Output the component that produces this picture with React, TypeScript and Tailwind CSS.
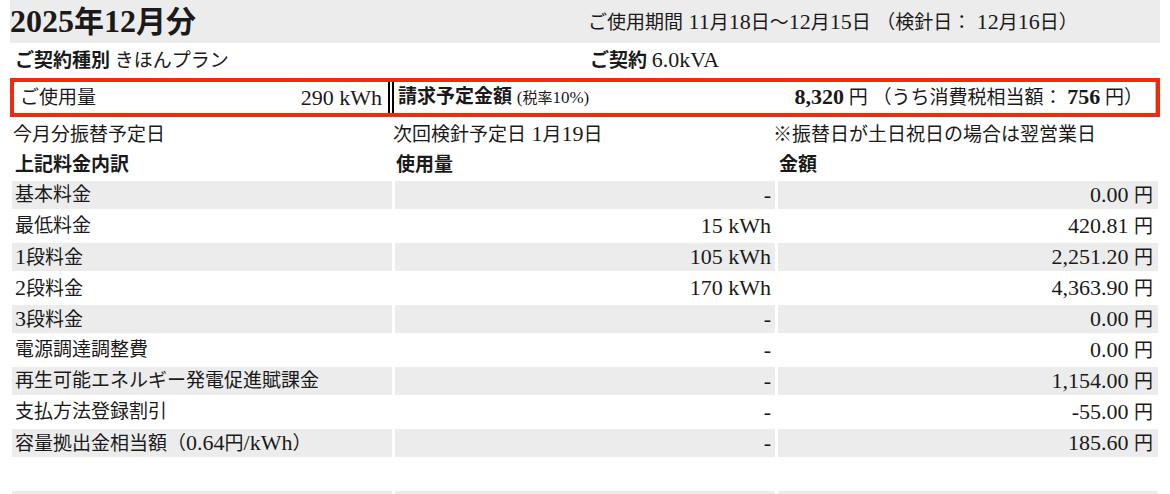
const rows = [
  { label: '基本料金', usage: '-', amount: '0.00 円' },
  { label: '最低料金', usage: '15 kWh', amount: '420.81 円' },
  { label: '1段料金', usage: '105 kWh', amount: '2,251.20 円' },
  { label: '2段料金', usage: '170 kWh', amount: '4,363.90 円' },
  { label: '3段料金', usage: '-', amount: '0.00 円' },
  { label: '電源調達調整費', usage: '-', amount: '0.00 円' },
  { label: '再生可能エネルギー発電促進賦課金', usage: '-', amount: '1,154.00 円' },
  { label: '支払方法登録割引', usage: '-', amount: '-55.00 円' },
  { label: '容量拠出金相当額（0.64円/kWh）', usage: '-', amount: '185.60 円' },
  { label: '', usage: '', amount: '' },
  { label: '', usage: '', amount: '' },
];

// latin runs render a bit larger so they sit like the mincho font's roman glyphs
const splitter = /([^\u3000-\u30ff\u3400-\u9fff\uff00-\uffef※]+)/;
const isLatin = /^[^\u3000-\u30ff\u3400-\u9fff\uff00-\uffef※]+$/;

const Mixed = ({ text, latin = 'text-[22px]' }: { text: string; latin?: string }) => (
  <>
    {text.split(splitter).map((part, i) =>
      part && isLatin.test(part) ? (
        <span key={i} className={latin}>
          {part}
        </span>
      ) : (
        part
      )
    )}
  </>
);

const App = () => {
  return (
    <div className="w-[1170px] h-[494px] overflow-hidden bg-white px-[10px] text-[19px] leading-[24px] text-[#1a1a1a] [font-family:'Liberation_Serif','Noto_Sans_CJK_JP',serif]">
      {/* header band */}
      <div className="grid grid-cols-2 h-[43px] items-center bg-[#ececec]">
        <h1 className="text-[30px] font-bold leading-[34px]">
          <Mixed text="2025年12月分" latin="text-[32px]" />
        </h1>
        <div className="pl-[3px] pt-[2px]">
          <Mixed text="ご使用期間 11月18日〜12月15日 （検針日： 12月16日）" />
        </div>
      </div>

      <div className="grid grid-cols-2 h-[35px] items-center">
        <div className="pl-[5px]">
          <span className="font-bold">ご契約種別</span> きほんプラン
        </div>
        <div className="pl-[5px]">
          <span className="font-bold">ご契約</span> <Mixed text="6.0kVA" />
        </div>
      </div>

      {/* highlighted summary */}
      <div className="flex h-[39px] border-4 border-[#f5280a]">
        <div className="flex w-[374px] items-center justify-between pl-[6px] pr-[6px]">
          <span>ご使用量</span>
          <span className="text-[22px]">290 kWh</span>
        </div>
        <div className="flex gap-[2px]">
          <div className="w-[2px] bg-black" />
          <div className="w-[2px] bg-black" />
        </div>
        <div className="flex flex-1 items-center justify-between border-r border-[#bbbbbb] pl-[4px] pr-[12px]">
          <span>
            <span className="font-bold">請求予定金額</span>{' '}
            <span className="text-[15px]">
              <Mixed text="(税率10%)" latin="text-[17px]" />
            </span>
          </span>
          <span>
            <span className="font-bold text-[22px]">8,320</span> 円 （うち消費税相当額：{' '}
            <span className="font-bold text-[22px]">756</span> 円）
          </span>
        </div>
      </div>

      <div className="flex flex-col gap-[3px] pt-[2px]">
        <div className="grid grid-cols-[380px_380px_1fr] h-[28px] items-center px-[3px] pt-[3px]">
          <div>今月分振替予定日</div>
          <div>
            <Mixed text="次回検針予定日 1月19日" />
          </div>
          <div>※振替日が土日祝日の場合は翌営業日</div>
        </div>

        <div className="grid grid-cols-3 gap-[3px] h-[28px] items-center px-[2px] pt-[2px] font-bold">
          <div className="pl-[3px]">上記料金内訳</div>
          <div className="pl-[1px]">使用量</div>
          <div className="pl-[1px]">金額</div>
        </div>

        {rows.map((row, i) => {
          const bg = i % 2 === 0 ? 'bg-[#ececec]' : 'bg-white';
          return (
            <div key={i} className="grid grid-cols-3 gap-[3px] h-[28px] px-[2px]">
              <div className={`${bg} flex items-center pl-[3px] whitespace-nowrap`}>
                <span>
                  <Mixed text={row.label} />
                </span>
              </div>
              <div className={`${bg} flex items-center justify-end pr-[4px]`}>
                <span>
                  <Mixed text={row.usage} />
                </span>
              </div>
              <div className={`${bg} flex items-center justify-end pr-[5px]`}>
                <span>
                  <Mixed text={row.amount} />
                </span>
              </div>
            </div>
          );
        })}
      </div>
    </div>
  );
};

export default App;
